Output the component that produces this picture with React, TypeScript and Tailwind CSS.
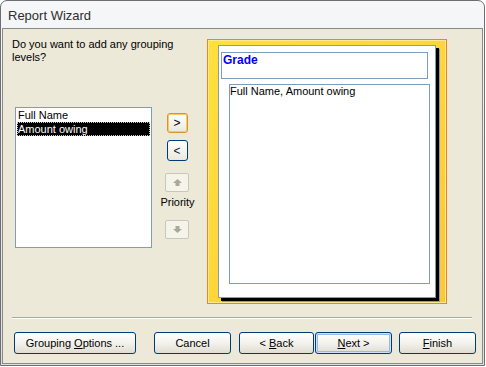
import React from "react";

function Btn({
  children,
  className = "",
  focus = false,
}: {
  children: React.ReactNode;
  className?: string;
  focus?: boolean;
}) {
  return (
    <div
      className={
        "h-[22px] rounded-[3px] border border-[#003c74] bg-linear-to-b from-[#ffffff] via-[#f3f2ec] to-[#e0ddd1] flex items-center justify-center text-[11px] leading-[13px] text-black " +
        (focus ? "shadow-[inset_0_0_0_1px_#cfe0fb,inset_0_0_0_2px_#98b8ee] " : "") +
        className
      }
    >
      <span className="whitespace-pre">{children}</span>
    </div>
  );
}

function ArrowIcon({ down = false }: { down?: boolean }) {
  return (
    <svg width="9" height="7" viewBox="0 0 9 7" className={down ? "rotate-180" : ""}>
      <path d="M4.5 0 L9 4 H6.5 V7 H2.5 V4 H0 Z" fill="#aca899" />
    </svg>
  );
}

export default function App() {
  return (
    <div className="w-[486px] h-[367px] bg-white font-['Liberation_Sans',Arial,sans-serif]">
      <div className="w-[485px] h-[366px] flex flex-col border border-[#6e6e6e] rounded-t-[7px] overflow-hidden bg-linear-to-b from-[#f6f7f9] to-[#dcdfe5]">
        <div className="h-[27px] shrink-0 flex items-center pl-[7px] pt-[2px] text-[13px] text-[#2e2e2e]">
          Report Wizard
        </div>
        <div className="flex-1 mx-[1px] mb-[1px] border border-[#8a8a8a] bg-[#ece9d8] flex flex-col pt-[9px] pl-[9px]">
          <div className="flex">
            <div className="w-[195px] flex flex-col">
              <div className="text-[11px] leading-[13px] text-black">
                Do you want to add any grouping
                <br />
                levels?
              </div>
              <div className="mt-[43px] flex">
                <div className="ml-[3px] w-[137px] h-[141px] border border-[#7f9db9] bg-white flex flex-col text-[11px] leading-[14px]">
                  <div className="h-[14px] pl-[2px] text-black">Full Name</div>
                  <div className="h-[14px] mx-[1px] pl-[1px] bg-black text-white outline-1 outline-dotted outline-[#c8c8c8] -outline-offset-1">
                    Amount owing
                  </div>
                </div>
                <div className="ml-[7px] w-[36px] flex flex-col items-center pt-[6px]">
                  <div className="w-[21px] h-[20px] rounded-[3px] border border-[#d9952c] shadow-[inset_0_0_0_1px_#f9c964] bg-linear-to-b from-white to-[#ebe8dc] flex items-center justify-center text-[12px] leading-[12px] text-black">
                    &gt;
                  </div>
                  <div className="mt-[7px] w-[21px] h-[21px] rounded-[3px] border border-[#003c74] bg-linear-to-b from-white to-[#ebe8dc] flex items-center justify-center text-[12px] leading-[12px] text-[#0a1a3a]">
                    &lt;
                  </div>
                  <div className="mt-[12px] w-[24px] h-[19px] rounded-[2px] border border-[#c9c7ba] bg-[#f5f4ea] flex items-center justify-center">
                    <ArrowIcon />
                  </div>
                  <div className="mt-[4px] ml-[1px] h-[13px] text-[11px] leading-[13px] text-black">Priority</div>
                  <div className="mt-[11px] w-[24px] h-[19px] rounded-[2px] border border-[#c9c7ba] bg-[#f5f4ea] flex items-center justify-center">
                    <ArrowIcon down />
                  </div>
                </div>
              </div>
            </div>
            <div className="mt-[1px] w-[240px] h-[265px] border border-[#f2851a] shadow-[inset_0_0_0_1px_#ffe98c] bg-linear-to-br from-[#ffe03c] via-[#ffd63a] to-[#fbc73e] pl-[10px] pt-[5px]">
              <div className="w-[218px] h-[253px] bg-white border border-[#7f9db9] shadow-[3px_3px_0_0_#000,4px_4px_0_0_#7f9db9] flex flex-col">
                <div className="ml-[2px] mt-[6px] w-[207px] h-[27px] border border-[#7f9db9] pl-[1px] text-[12px] leading-[14px] font-bold text-[#0000ff]">
                  Grade
                </div>
                <div className="ml-[10px] mt-[5px] w-[201px] h-[200px] border border-[#7f9db9] text-[11px] leading-[13px] text-black">
                  Full Name, Amount owing
                </div>
              </div>
            </div>
          </div>
          <div className="mt-[13px] w-[460px] h-[2px] border-t border-b border-t-[#aca899] border-b-white" />
          <div className="mt-[13px] ml-[2px] flex">
            <Btn className="w-[122px]">
              Grouping <span className="underline">O</span>ptions ...
            </Btn>
            <Btn className="ml-[18px] w-[77px]">Cancel</Btn>
            <Btn className="ml-[8px] w-[75px]">
              &lt; <span className="underline">B</span>ack
            </Btn>
            <Btn className="ml-[1px] w-[77px]" focus>
              <span className="underline">N</span>ext &gt;
            </Btn>
            <Btn className="ml-[7px] w-[77px]">
              <span className="underline">F</span>inish
            </Btn>
          </div>
        </div>
      </div>
    </div>
  );
}
